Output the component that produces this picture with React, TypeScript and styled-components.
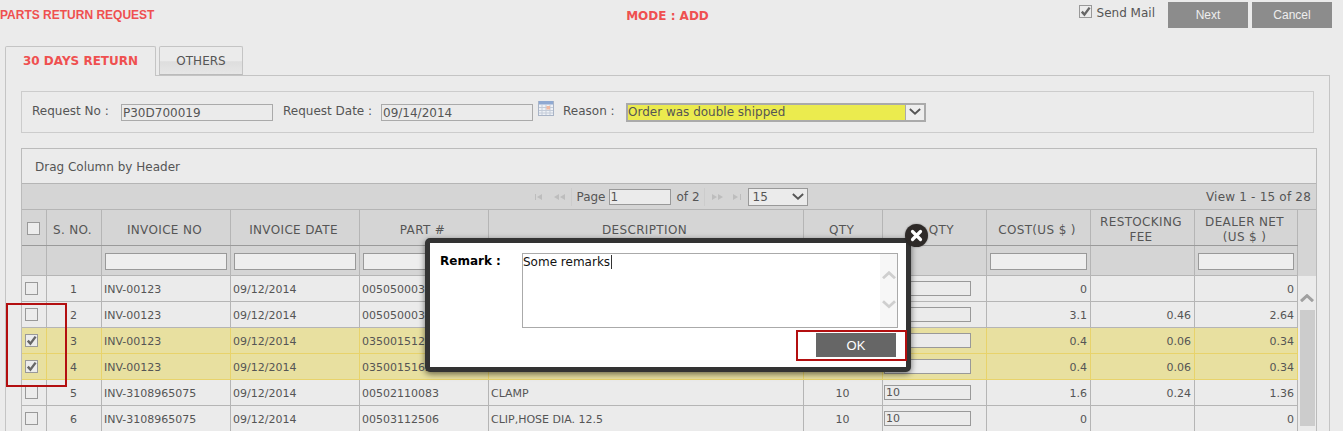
import styled, { createGlobalStyle } from "styled-components";

const GlobalStyle = createGlobalStyle`
  html, body {
    margin: 0;
    padding: 0;
    background: #ebebeb;
  }
  body {
    font-family: "DejaVu Sans", Verdana, sans-serif;
    font-size: 11px;
    color: #555;
  }
`;

const COLUMNS = "25px 55px 129px 129px 129px 315px 79px 104px 104px 104px 103px";

const Page = styled.div`
  position: relative;
  width: 1343px;
  height: 431px;
  overflow: hidden;
`;

const TopBar = styled.header`
  display: grid;
  grid-template-columns: 1fr auto 1fr;
  align-items: start;
  height: 46px;
  padding: 2px 11px 0 0;
  box-sizing: border-box;
`;

const PageTitle = styled.div`
  font-family: "Liberation Sans", Arial, sans-serif;
  font-size: 12px;
  font-weight: bold;
  color: #ef5050;
  line-height: 26px;
`;

const ModeLabel = styled.div`
  font-size: 12px;
  font-weight: bold;
  color: #ef5050;
  line-height: 28px;
  margin-left: 3px;
`;

const TopActions = styled.div`
  display: flex;
  justify-content: flex-end;
  align-items: flex-start;
`;

const SendMail = styled.label`
  display: flex;
  align-items: flex-start;
  gap: 5px;
  margin-right: 9px;
  font-size: 12px;
  line-height: 22px;
`;

const ActionButton = styled.button`
  width: 80px;
  height: 26px;
  margin-left: 4px;
  border: 0;
  background: #8c8c8c;
  color: #eee;
  font-family: "Liberation Sans", Arial, sans-serif;
  font-size: 12px;
`;

const CheckBox = styled.span`
  display: flex;
  align-items: center;
  justify-content: center;
  width: 13px;
  height: 13px;
  box-sizing: border-box;
  border: 1px solid #999;
  background: #ececec;

  svg {
    display: block;
    flex: none;
  }
`;

const MailCheckBox = styled(CheckBox)`
  margin-top: 3px;
`;

const Tabs = styled.nav`
  display: flex;
  gap: 3px;
  margin-left: 5px;
  height: 30px;
  position: relative;
  z-index: 1;
`;

const Tab = styled.div<{ $active?: boolean; $width: number }>`
  width: ${({ $width }) => $width}px;
  height: ${({ $active }) => ($active ? 30 : 29)}px;
  box-sizing: border-box;
  border: 1px solid #c4c4c4;
  border-bottom: ${({ $active }) => ($active ? "0" : "1px solid #bbb")};
  border-radius: 2px 2px 0 0;
  text-align: center;
  line-height: 28px;
  font-size: 12px;
  font-weight: ${({ $active }) => ($active ? "bold" : "normal")};
  color: ${({ $active }) => ($active ? "#ef5050" : "#555")};
  background: ${({ $active }) =>
    $active ? "#ebebeb" : "linear-gradient(#ebebeb 0%, #ebebeb 50%, #dedede 55%, #e6e6e6 100%)"};
`;

const Panel = styled.main`
  width: 1325px;
  margin: -1px 0 0 5px;
  padding: 15px 0 0 15px;
  box-sizing: border-box;
  border: 1px solid #c4c4c4;
  border-bottom: 0;
  height: 400px;
`;

const FilterForm = styled.section`
  display: flex;
  align-items: center;
  width: 1293px;
  height: 42px;
  box-sizing: border-box;
  border: 1px solid #ccc;
  padding-left: 10px;
  font-size: 12px;
`;

const FormLabel = styled.span<{ $width: number; $gap?: number }>`
  width: ${({ $width }) => $width}px;
  margin: -2px 0 0 ${({ $gap }) => $gap || 0}px;
  flex: none;
`;

const TextField = styled.div<{ $width: number; $drop?: boolean }>`
  width: ${({ $width }) => $width}px;
  height: 17px;
  margin-top: ${({ $drop }) => ($drop ? 1 : 0)}px;
  box-sizing: border-box;
  border: 1px solid #aaa;
  padding-left: 1px;
  line-height: 17px;
  font-size: 12px;
  flex: none;
`;

const CalendarWrap = styled.span`
  width: 30px;
  flex: none;
  display: flex;
  padding-left: 5px;
  box-sizing: border-box;
  margin-top: -9px;
`;

const ReasonSelect = styled.div`
  display: flex;
  width: 300px;
  height: 19px;
  box-sizing: border-box;
  border: 2px solid #aaa;
  background: #ebeb4e;
  font-size: 12px;
  line-height: 15px;
  padding-left: 0;
`;

const ReasonText = styled.span`
  flex: 1;
`;

const ReasonArrow = styled.span`
  width: 18px;
  background: #eee;
  border-left: 1px solid #aaa;
  display: flex;
  align-items: center;
  justify-content: center;
`;

const GridWrap = styled.section`
  width: 1296px;
  height: 284px;
  margin-top: 15px;
  box-sizing: border-box;
  border: 1px solid #bbb;
  border-bottom: 0;
`;

const GridCaption = styled.div`
  height: 35px;
  box-sizing: border-box;
  border-bottom: 1px solid #b5b5b5;
  padding-left: 13px;
  line-height: 36px;
  font-size: 12px;
`;

const Pager = styled.div`
  display: grid;
  grid-template-columns: 1fr auto 1fr;
  align-items: center;
  height: 26px;
  box-sizing: border-box;
  border-bottom: 1px solid #b5b5b5;
  background: #d5d5d5;
  font-size: 12px;
`;

const PagerCenter = styled.div`
  display: flex;
  align-items: center;
  grid-column: 2;
  margin-left: -2px;
`;

const PagerIcons = styled.span<{ $next?: boolean }>`
  display: flex;
  align-items: center;
  gap: 7px;
  padding: 0 ${({ $next }) => ($next ? 5 : 6)}px 0 ${({ $next }) => ($next ? 4 : 6)}px;
`;

const PagerDivider = styled.span`
  width: 1px;
  height: 18px;
  background: #ccc;
`;

const PageInput = styled.div`
  width: 62px;
  height: 16px;
  box-sizing: border-box;
  border: 1px solid #999;
  background: #ebebeb;
  margin: 0 6px 0 3px;
  line-height: 15px;
  padding-left: 1px;
`;

const PageText = styled.span`
  margin-left: 4px;
`;

const PageSize = styled.div`
  display: flex;
  align-items: center;
  justify-content: space-between;
  width: 60px;
  height: 18px;
  box-sizing: border-box;
  border: 1px solid #999;
  background: #ebebeb;
  padding: 0 3px 0 4px;
`;

const ViewInfo = styled.div`
  text-align: right;
  padding-right: 5px;
  letter-spacing: 0.2px;
`;

const GridRow = styled.div<{ $height: number; $selected?: boolean; $shade?: boolean; $strong?: boolean }>`
  display: grid;
  grid-template-columns: ${COLUMNS};
  height: ${({ $height }) => $height}px;
  box-sizing: border-box;
  background: ${({ $selected, $shade }) => ($selected ? "#e8e0a0" : $shade ? "#d5d5d5" : "#ebebeb")};
  border-bottom: 1px solid ${({ $selected, $strong }) => ($selected ? "#e8d36b" : $strong ? "#9a9a9a" : "#b5b5b5")};
`;

const Cell = styled.div<{ $align?: string; $selected?: boolean }>`
  display: flex;
  align-items: center;
  justify-content: ${({ $align }) => $align || "flex-start"};
  padding: 2px 3px 0 2px;
  box-sizing: border-box;
  border-right: 1px solid ${({ $selected }) => ($selected ? "#e8d36b" : "#b5b5b5")};
  white-space: nowrap;
  overflow: hidden;
`;

const CheckCell = styled(Cell)`
  padding: 0 7px 0 2px;
`;

const QtyCell = styled(Cell)`
  padding: 0 3px 0 1px;
`;

const HeadCell = styled(Cell)`
  justify-content: center;
  text-align: center;
  font-size: 12px;
  line-height: 15px;
  letter-spacing: 0.35px;
  padding: 5px 3px 0 0;
`;

const HeadCheckCell = styled(HeadCell)`
  padding: 2px 1px 0 0;
`;

const FilterCell = styled(Cell)`
  padding: 2px 3px 0;
`;

const HeadRowOuter = styled.div`
  display: flex;
  background: #d5d5d5;
`;

const SearchInput = styled.div`
  width: 100%;
  height: 17px;
  box-sizing: border-box;
  border: 1px solid #999;
  background: #eee;
`;

const BodyOuter = styled.div`
  display: flex;
`;

const Rows = styled.div`
  width: 1276px;
  flex: none;
`;

const Scrollbar = styled.aside`
  flex: 1;
  display: flex;
  flex-direction: column;
  align-items: center;
  padding-top: 18px;
  gap: 8px;
`;

const ScrollThumb = styled.div`
  width: 15px;
  height: 116px;
  background: #ccc;
`;

const QtyInput = styled.div`
  width: 87px;
  height: 15px;
  box-sizing: border-box;
  border: 1px solid #999;
  background: #ebebeb;
  line-height: 14px;
  padding-left: 1px;
`;

const Modal = styled.div`
  position: absolute;
  left: 425px;
  top: 238px;
  width: 486px;
  height: 134px;
  box-sizing: border-box;
  border: 5px solid #333;
  border-radius: 5px;
  background: #fff;
  box-shadow: 0 2px 6px rgba(0, 0, 0, 0.55);
  padding: 10px 8px 0 10px;
  color: #111;
`;

const ModalBody = styled.div`
  display: flex;
`;

const RemarkLabel = styled.div`
  width: 82px;
  font-size: 12px;
  font-weight: bold;
  line-height: 16px;
  color: #000;
`;

const RemarkBox = styled.div`
  display: flex;
  width: 376px;
  height: 75px;
  box-sizing: border-box;
  border: 1px solid #aaa;
  font-size: 12px;
`;

const RemarkText = styled.div`
  flex: 1;
  line-height: 16px;
`;

const Caret = styled.span`
  border-right: 1px solid #333;
  padding-right: 1px;
`;

const RemarkScroll = styled.div`
  width: 17px;
  background: #f7f7f7;
  display: flex;
  flex-direction: column;
  align-items: center;
  gap: 21px;
  padding-top: 17px;
  box-sizing: border-box;
`;

const ModalFooter = styled.div`
  display: flex;
  justify-content: flex-end;
  margin: 5px 2px 0 0;
`;

const OkButton = styled.button`
  width: 80px;
  height: 24px;
  border: 0;
  background: #666;
  color: #fff;
  font-family: "Liberation Sans", Arial, sans-serif;
  font-size: 13px;
`;

const CloseButton = styled.div`
  position: absolute;
  left: 905px;
  top: 224px;
  width: 23px;
  height: 23px;
  border-radius: 50%;
  background: #2e2a28;
  box-shadow: 0 0 2px rgba(0, 0, 0, 0.4);
  display: flex;
  align-items: center;
  justify-content: center;
`;

const Callout = styled.div<{ $left: number; $top: number; $width: number; $height: number }>`
  position: absolute;
  left: ${({ $left }) => $left}px;
  top: ${({ $top }) => $top}px;
  width: ${({ $width }) => $width}px;
  height: ${({ $height }) => $height}px;
  box-sizing: border-box;
  border: 2px solid #b30f10;
`;

const Check = () => (
  <svg width="11" height="11" viewBox="0 0 11 11">
    <path d="M1.8 5.6 L4.4 8.6 L9.6 1.6" fill="none" stroke="#666" strokeWidth="2.4" />
  </svg>
);

const Chevron = ({ up, color, size = 14, weight = 2.2 }: { up?: boolean; color: string; size?: number; weight?: number }) => (
  <svg width={size} height={size * 0.6} viewBox="0 0 14 8">
    <path d={up ? "M1 7 L7 1.5 L13 7" : "M1 1 L7 6.5 L13 1"} fill="none" stroke={color} strokeWidth={weight} />
  </svg>
);

const PagerGlyph = ({ d }: { d: string }) => (
  <svg width="12" height="8" viewBox="0 0 12 8">
    <path d={d} fill="#bdbdbd" />
  </svg>
);

const Calendar = () => (
  <svg width="16" height="16" viewBox="0 0 16 16">
    <rect x="0.5" y="1.5" width="15" height="14" fill="#eef1f6" stroke="#a9b4c6" />
    <rect x="1" y="1" width="14" height="3.5" fill="#8fa9d2" />
    <path d="M1 7.5H15M1 10.5H15M1 13H15M4 4.5V15M8 4.5V15M12 4.5V15" stroke="#c3cbd8" strokeWidth="1" fill="none" />
    <rect x="8.5" y="6" width="3.5" height="3.5" fill="#f0b9a2" />
  </svg>
);

type RowData = {
  no: number;
  invoice: string;
  part: string;
  desc?: string;
  qty?: string;
  cost: string;
  fee?: string;
  net: string;
  selected?: boolean;
};

// the qty values of rows 1-4 sit behind the remark popup, so they stay empty
const rows: RowData[] = [
  { no: 1, invoice: "INV-00123", part: "00505000385", cost: "0", net: "0" },
  { no: 2, invoice: "INV-00123", part: "00505000386", cost: "3.1", fee: "0.46", net: "2.64" },
  { no: 3, invoice: "INV-00123", part: "03500151226", cost: "0.4", fee: "0.06", net: "0.34", selected: true },
  { no: 4, invoice: "INV-00123", part: "03500151626", cost: "0.4", fee: "0.06", net: "0.34", selected: true },
  { no: 5, invoice: "INV-3108965075", part: "00502110083", desc: "CLAMP", qty: "10", cost: "1.6", fee: "0.24", net: "1.36" },
  { no: 6, invoice: "INV-3108965075", part: "00503112506", desc: "CLIP,HOSE DIA. 12.5", qty: "10", cost: "0", net: "0" },
];

const headers = ["S. NO.", "INVOICE NO", "INVOICE DATE", "PART #", "DESCRIPTION", "QTY", "R. QTY", "COST(US $ )"];

const App = () => {
  return (
    <Page>
      <GlobalStyle />
      <TopBar>
        <PageTitle>PARTS RETURN REQUEST</PageTitle>
        <ModeLabel>MODE : ADD</ModeLabel>
        <TopActions>
          <SendMail>
            <MailCheckBox>
              <Check />
            </MailCheckBox>
            Send Mail
          </SendMail>
          <ActionButton>Next</ActionButton>
          <ActionButton>Cancel</ActionButton>
        </TopActions>
      </TopBar>

      <Tabs>
        <Tab $active $width={151}>30 DAYS RETURN</Tab>
        <Tab $width={84}>OTHERS</Tab>
      </Tabs>

      <Panel>
        <FilterForm>
          <FormLabel $width={89}>Request No :</FormLabel>
          <TextField $width={152}>P30D700019</TextField>
          <FormLabel $width={98} $gap={10}>Request Date :</FormLabel>
          <TextField $width={152} $drop>09/14/2014</TextField>
          <CalendarWrap>
            <Calendar />
          </CalendarWrap>
          <FormLabel $width={63}>Reason :</FormLabel>
          <ReasonSelect>
            <ReasonText>Order was double shipped</ReasonText>
            <ReasonArrow>
              <Chevron color="#555" size={12} />
            </ReasonArrow>
          </ReasonSelect>
        </FilterForm>

        <GridWrap>
          <GridCaption>Drag Column by Header</GridCaption>
          <Pager>
            <PagerCenter>
              <PagerIcons>
                <PagerGlyph d="M1 1H2V7H1ZM8 1V7L3 4Z" />
                <PagerGlyph d="M6 1V7L1 4ZM12 1V7L7 4Z" />
              </PagerIcons>
              <PagerDivider />
              <PageText>Page</PageText>
              <PageInput>1</PageInput>
              of 2
              <PagerIcons $next>
                <PagerDivider />
                <PagerGlyph d="M0 1V7L5 4ZM6 1V7L11 4Z" />
                <PagerGlyph d="M2 1V7L7 4ZM9 1H10V7H9Z" />
              </PagerIcons>
              <PageSize>
                15
                <Chevron color="#555" size={12} />
              </PageSize>
            </PagerCenter>
            <ViewInfo>View 1 - 15 of 28</ViewInfo>
          </Pager>

          <HeadRowOuter>
            <div>
              <GridRow $height={36} $shade $strong>
                <HeadCheckCell>
                  <CheckBox />
                </HeadCheckCell>
                {headers.map((h) => (
                  <HeadCell key={h}>{h}</HeadCell>
                ))}
                <HeadCell>RESTOCKING<br />FEE</HeadCell>
                <HeadCell>DEALER NET<br />(US $ )</HeadCell>
              </GridRow>
              <GridRow $height={30} $shade>
                <FilterCell />
                <FilterCell />
                <FilterCell><SearchInput /></FilterCell>
                <FilterCell><SearchInput /></FilterCell>
                <FilterCell><SearchInput /></FilterCell>
                <FilterCell />
                <FilterCell />
                <FilterCell />
                <FilterCell><SearchInput /></FilterCell>
                <FilterCell />
                <FilterCell><SearchInput /></FilterCell>
              </GridRow>
            </div>
          </HeadRowOuter>

          <BodyOuter>
            <Rows>
              {rows.map((r) => (
                <GridRow key={r.no} $height={26} $selected={r.selected}>
                  <CheckCell $align="center" $selected={r.selected}>
                    <CheckBox>{r.selected && <Check />}</CheckBox>
                  </CheckCell>
                  <Cell $align="center" $selected={r.selected}>{r.no}</Cell>
                  <Cell $selected={r.selected}>{r.invoice}</Cell>
                  <Cell $selected={r.selected}>09/12/2014</Cell>
                  <Cell $selected={r.selected}>{r.part}</Cell>
                  <Cell $selected={r.selected}>{r.desc}</Cell>
                  <Cell $align="center" $selected={r.selected}>{r.qty}</Cell>
                  <QtyCell $selected={r.selected}>
                    <QtyInput>{r.qty}</QtyInput>
                  </QtyCell>
                  <Cell $align="flex-end" $selected={r.selected}>{r.cost}</Cell>
                  <Cell $align="flex-end" $selected={r.selected}>{r.fee}</Cell>
                  <Cell $align="flex-end" $selected={r.selected}>{r.net}</Cell>
                </GridRow>
              ))}
            </Rows>
            <Scrollbar>
              <Chevron up color="#a0a0a0" weight={3} />
              <ScrollThumb />
            </Scrollbar>
          </BodyOuter>
        </GridWrap>
      </Panel>

      <Callout $left={6} $top={303} $width={61} $height={84} />

      <Modal>
        <ModalBody>
          <RemarkLabel>Remark :</RemarkLabel>
          <RemarkBox>
            <RemarkText>
              <Caret>Some remarks</Caret>
            </RemarkText>
            <RemarkScroll>
              <Chevron up color="#cfcfcf" weight={2.8} />
              <Chevron color="#cfcfcf" weight={2.8} />
            </RemarkScroll>
          </RemarkBox>
        </ModalBody>
        <ModalFooter>
          <OkButton>OK</OkButton>
        </ModalFooter>
      </Modal>
      <CloseButton>
        <svg width="13" height="13" viewBox="0 0 13 13">
          <path d="M2.5 2.5 L10.5 10.5 M10.5 2.5 L2.5 10.5" stroke="#fff" strokeWidth="3.2" strokeLinecap="round" />
        </svg>
      </CloseButton>
      <Callout $left={796} $top={330} $width={111} $height={31} />
    </Page>
  );
};

export default App;
